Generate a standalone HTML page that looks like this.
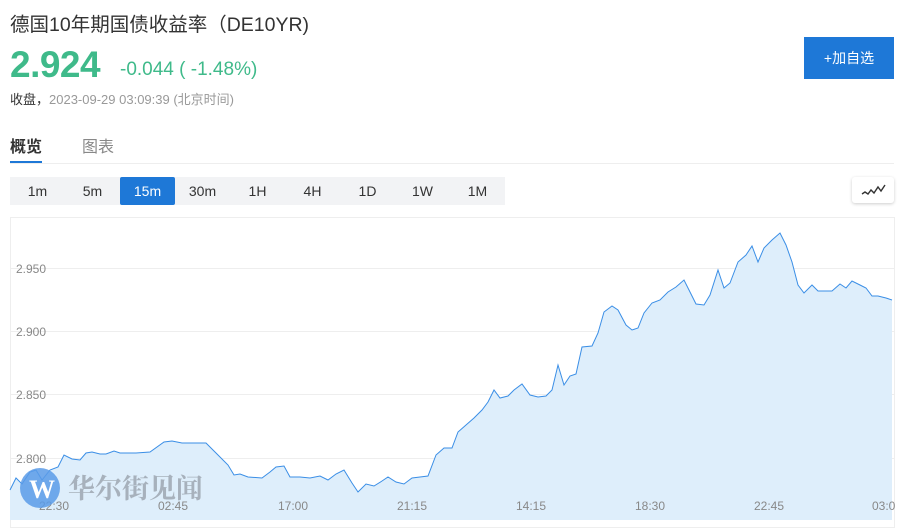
<!DOCTYPE html>
<html><head><meta charset="utf-8"><style>
body{margin:0;width:913px;height:530px;overflow:hidden;background:#fff;font-family:"Liberation Sans","Noto Sans CJK SC",sans-serif;position:relative}
.a{position:absolute;white-space:nowrap}
.tb{position:absolute;top:177px;left:10px;width:495px;height:28px;background:#f2f3f5}
.tb span{float:left;width:55px;height:28px;line-height:28px;text-align:center;font-size:14px;color:#333}
.tb span.on{background:#1e78d7;color:#fff;border-radius:2px}
</style></head><body>
<div class="a" style="left:10px;top:8px;font-size:19.5px;color:#333">德国10年期国债收益率（DE10YR)</div>
<div class="a" style="left:10px;top:44px;font-size:37px;font-weight:bold;color:#3fba8a;letter-spacing:-0.5px">2.924</div>
<div class="a" style="left:120px;top:59px;font-size:19px;color:#3fba8a">-0.044 ( -1.48%)</div>
<div class="a" style="left:10px;top:89px;font-size:13px;color:#333">收盘，<span style="color:#999">2023-09-29 03:09:39 (北京时间)</span></div>
<div class="a" style="left:804px;top:37px;width:90px;height:42px;background:#1e78d7;color:#fff;font-size:14px;line-height:42px;text-align:center">+加自选</div>
<div class="a" style="left:10px;top:133px;font-size:16px;font-weight:bold;color:#333">概览</div>
<div class="a" style="left:82px;top:133px;font-size:16px;color:#888">图表</div>
<div class="a" style="left:10px;top:161px;width:32px;height:3px;background:#1e78d7"></div>
<div class="a" style="left:10px;top:163px;width:884px;height:1px;background:#eee"></div>
<div class="tb"><span>1m</span><span>5m</span><span class="on">15m</span><span>30m</span><span>1H</span><span>4H</span><span>1D</span><span>1W</span><span>1M</span></div>
<div class="a" style="left:852px;top:177px;width:42px;height:26px;background:#fff;border-radius:3px;box-shadow:0 1px 3px rgba(0,0,0,.2)">
<svg width="42" height="26"><polyline points="10,17 13,15 16,17 19,13 22,16 26,10 29,14 33,8" fill="none" stroke="#333" stroke-width="1.4"/></svg></div>
<svg class="a" style="left:0;top:0" width="913" height="530">
<rect x="10.5" y="217.5" width="884" height="310" fill="none" stroke="#eee"/>
<g stroke="#eee"><line x1="11" y1="268.5" x2="894" y2="268.5"/><line x1="11" y1="331.5" x2="894" y2="331.5"/><line x1="11" y1="394.5" x2="894" y2="394.5"/><line x1="11" y1="458.5" x2="894" y2="458.5"/></g>
<polygon fill="#deeefb" points="10,520 10,490 16,478 22,484 30,472 36,470 42,480 50,470 58,467 64,455 72,459 80,460 86,453 92,452 100,454 106,454 114,451 120,453 128,453 136,453 150,452 164,442 172,441 182,443 194,443 206,443 218,455 228,465 234,475 240,474 248,477 262,478 270,472 276,467 284,466 290,477 300,477 310,478 320,476 328,480 336,474 344,470 352,483 358,492 366,484 374,486 382,481 388,477 396,482 404,484 412,478 420,477 428,476 436,455 444,448 452,448 458,432 466,425 474,418 482,410 488,402 494,390 500,398 508,396 514,390 522,384 530,395 538,397 546,396 552,390 558,365 564,385 570,376 576,374 582,347 592,346 598,333 604,312 612,306 618,310 626,325 632,330 638,328 644,313 652,303 660,300 668,292 676,287 684,280 690,292 696,304 704,305 710,295 718,270 724,288 730,283 738,262 746,255 752,246 758,262 764,248 772,240 780,233 786,245 792,262 798,285 804,293 812,285 818,291 826,291 832,291 840,284 846,288 852,281 860,285 866,288 872,296 878,296 886,298 892,300 892,520"/>
<polyline fill="none" stroke="#3a8ee6" stroke-width="1" points="10,490 16,478 22,484 30,472 36,470 42,480 50,470 58,467 64,455 72,459 80,460 86,453 92,452 100,454 106,454 114,451 120,453 128,453 136,453 150,452 164,442 172,441 182,443 194,443 206,443 218,455 228,465 234,475 240,474 248,477 262,478 270,472 276,467 284,466 290,477 300,477 310,478 320,476 328,480 336,474 344,470 352,483 358,492 366,484 374,486 382,481 388,477 396,482 404,484 412,478 420,477 428,476 436,455 444,448 452,448 458,432 466,425 474,418 482,410 488,402 494,390 500,398 508,396 514,390 522,384 530,395 538,397 546,396 552,390 558,365 564,385 570,376 576,374 582,347 592,346 598,333 604,312 612,306 618,310 626,325 632,330 638,328 644,313 652,303 660,300 668,292 676,287 684,280 690,292 696,304 704,305 710,295 718,270 724,288 730,283 738,262 746,255 752,246 758,262 764,248 772,240 780,233 786,245 792,262 798,285 804,293 812,285 818,291 826,291 832,291 840,284 846,288 852,281 860,285 866,288 872,296 878,296 886,298 892,300"/>
<g font-size="12" fill="#888" font-family="Liberation Sans,sans-serif"><text x="16" y="273">2.950</text><text x="16" y="336">2.900</text><text x="16" y="399">2.850</text><text x="16" y="463">2.800</text>
<text x="39" y="510">22:30</text><text x="158" y="510">02:45</text><text x="278" y="510">17:00</text><text x="397" y="510">21:15</text><text x="516" y="510">14:15</text><text x="635" y="510">18:30</text><text x="754" y="510">22:45</text><text x="872" y="510">03:0</text></g>
<circle cx="40" cy="488" r="20" fill="#5b9be8" opacity=".85"/>
<text x="29" y="498" font-size="26" font-family="Liberation Serif,serif" font-weight="bold" fill="#fff">W</text>
<text x="68" y="498" font-size="27" font-weight="bold" fill="#9aa3ad" opacity=".8" font-family="Noto Serif CJK SC,serif">华尔街见闻</text>
</svg>
</body></html>
